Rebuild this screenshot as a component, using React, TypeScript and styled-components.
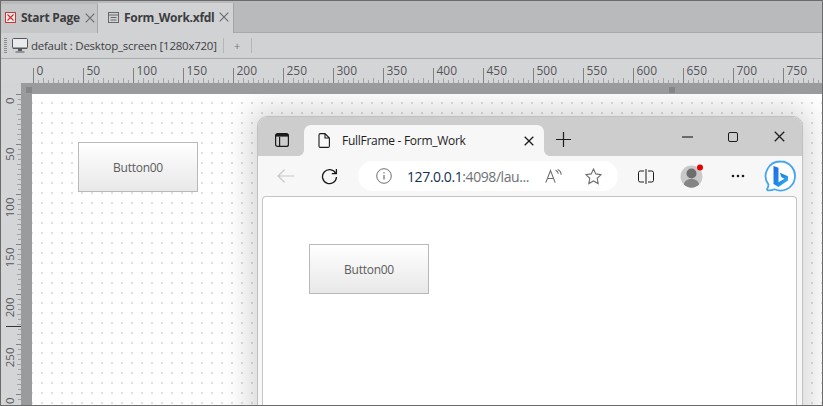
import React from "react";
import styled, { createGlobalStyle } from "styled-components";

const Global = createGlobalStyle`
  html, body { margin: 0; padding: 0; background: #fff; }
  * { box-sizing: border-box; }
`;

const Frame = styled.div`
  position: relative;
  width: 823px;
  height: 406px;
  border: 1px solid #6b6b6b;
  overflow: hidden;
  display: flex;
  flex-direction: column;
  font-family: "Open Sans", "Noto Sans", sans-serif;
  background: #d3d4d6;
`;

const TabBar = styled.div`
  height: 32px;
  flex: none;
  display: flex;
  align-items: flex-end;
  background: #b9babc;
  border-bottom: 1px solid #a9aaac;
  padding-top: 2px;
`;

const Tab = styled.div<{ $active?: boolean }>`
  height: ${(p) => (p.$active ? "30px" : "29px")};
  margin-bottom: -1px;
  padding-bottom: 2px;
  width: ${(p) => (p.$active ? "136px" : "97px")};
  flex: none;
  display: flex;
  align-items: center;
  gap: 5px;
  padding-left: ${(p) => (p.$active ? "10px" : "4px")};
  background: ${(p) => (p.$active ? "#d1d2d4" : "#c5c6c8")};
  border-right: 1px solid #a5a6a8;
  font-size: 12px;
  font-weight: 700;
  color: #3c3d40;
  letter-spacing: -0.28px;
`;

const TabClose = styled.span`
  display: flex;
  color: #68696c;
`;

const Toolbar = styled.div`
  height: 26px;
  flex: none;
  display: flex;
  align-items: center;
  padding-left: 3px;
  background: #d1d2d4;
  border-bottom: 1px solid #a9aaac;
  font-size: 11.5px;
  color: #3f4044;
`;

const Grip = styled.div`
  width: 3px;
  height: 16px;
  margin-right: 5px;
  background: repeating-linear-gradient(to bottom, #8a8b8d 0 1px, transparent 1px 2px);
`;

const ToolLabel = styled.span`
  margin-left: 3px;
  white-space: nowrap;
  letter-spacing: -0.25px;
`;

const ToolSep = styled.span<{ $gap?: number }>`
  width: 1px;
  height: 15px;
  margin-left: ${(p) => p.$gap ?? 0}px;
  background: #b4b5b7;
  flex: none;
`;

const ToolPlus = styled.span`
  width: 27px;
  text-align: center;
  font-size: 11px;
  color: #77787b;
`;

const RulerTop = styled.svg`
  display: block;
  flex: none;
  width: 821px;
  height: 24px;
  background: #d4d5d7;
`;

const Band = styled.div`
  position: relative;
  flex: none;
  height: 11px;
  margin-left: 20px;
  background: #9a9b9d;
`;

const BandMark = styled.span<{ $left: number }>`
  position: absolute;
  left: ${(p) => p.$left}px;
  top: 4px;
  width: 6px;
  height: 6px;
  background: #858688;
`;

const Body = styled.div`
  flex: 1;
  min-height: 0;
  display: flex;
`;

const RulerLeft = styled.svg`
  display: block;
  flex: none;
  width: 20px;
  height: 311px;
  background: #d4d5d7;
`;

const BandSide = styled.div`
  flex: none;
  width: 11px;
  background: #9a9b9d;
`;

const Canvas = styled.div`
  position: relative;
  flex: 1;
  background-color: #fff;
  background-image: radial-gradient(circle at 1px 1px, #e0e0e0 1px, transparent 1.1px);
  background-size: 10px 10px;
  background-position: 9px 8px;
  overflow: hidden;
`;

const FormButton = styled.div<{ $left: number; $top: number }>`
  position: absolute;
  left: ${(p) => p.$left}px;
  top: ${(p) => p.$top}px;
  width: 120px;
  height: 50px;
  display: flex;
  align-items: center;
  justify-content: center;
  border: 1px solid #b9b9b9;
  background: linear-gradient(#ffffff, #e8e8e8);
  font-family: "Open Sans", sans-serif;
  font-size: 12px;
  letter-spacing: -0.25px;
  color: #5c5c5c;
`;

const BrowserWindow = styled.div`
  position: absolute;
  left: 225px;
  top: 22px;
  width: 546px;
  height: 320px;
  border-radius: 10px 10px 0 0;
  border: 1px solid #c0c0c0;
  background: #f7f7f7;
  box-shadow: 0 0 28px 8px rgba(0, 0, 0, 0.16);
  display: flex;
  flex-direction: column;
  font-family: "Open Sans", sans-serif;
`;

const TabStrip = styled.div`
  height: 39px;
  flex: none;
  display: flex;
  align-items: flex-end;
  background: #cdcdcd;
  border-radius: 9px 9px 0 0;
`;

const StripIcon = styled.span`
  width: 46px;
  height: 31px;
  flex: none;
  display: flex;
  align-items: center;
  justify-content: center;
  padding-bottom: 2px;
  padding-left: 1px;
`;

const BrowserTab = styled.div`
  position: relative;
  width: 240px;
  height: 31px;
  flex: none;
  display: flex;
  align-items: center;
  background: #f7f7f7;
  border-radius: 7px 7px 0 0;
  padding: 0 10px 0 14px;
  font-size: 12px;
  color: #1d1d1d;

  &::before,
  &::after {
    content: "";
    position: absolute;
    bottom: 0;
    width: 6px;
    height: 6px;
  }
  &::before {
    left: -6px;
    background: radial-gradient(circle at 0 0, #cdcdcd 5.6px, #f7f7f7 6.2px);
  }
  &::after {
    right: -6px;
    background: radial-gradient(circle at 100% 0, #cdcdcd 5.6px, #f7f7f7 6.2px);
  }
`;

const BrowserTabTitle = styled.span`
  flex: 1;
  margin-left: 12px;
  letter-spacing: -0.28px;
  white-space: nowrap;
`;

const NewTab = styled.span`
  width: 39px;
  height: 31px;
  flex: none;
  display: flex;
  align-items: center;
  justify-content: center;
  padding-bottom: 2px;
`;

const WindowControls = styled.div`
  margin-left: auto;
  display: flex;
  align-self: stretch;
`;

const WindowControl = styled.span`
  width: 46px;
  display: flex;
  align-items: center;
  justify-content: center;
`;

const NavBar = styled.div`
  height: 40px;
  flex: none;
  display: flex;
  align-items: center;
  padding-left: 8px;
`;

const NavButton = styled.span<{ $width: number }>`
  width: ${(p) => p.$width}px;
  flex: none;
  display: flex;
  align-items: center;
  justify-content: center;
`;

const AddressPill = styled.div`
  width: 260px;
  height: 30px;
  flex: none;
  margin-left: 4px;
  display: flex;
  align-items: center;
  border-radius: 15px;
  background: #fff;
  padding-left: 18px;
  font-size: 14px;
`;

const Url = styled.span`
  margin-left: 15px;
  color: #14324f;
  white-space: nowrap;
  letter-spacing: -0.42px;
`;

const UrlRest = styled.span`
  color: #6f7174;
`;

const PillIcon = styled.span<{ $gap: number }>`
  display: flex;
  margin-left: ${(p) => p.$gap}px;
`;

const Viewport = styled.div`
  flex: 1;
  position: relative;
  margin: 0 5px 0 4px;
  background: #fff;
  border: 1px solid #c4c4c4;
  border-bottom: none;
  border-radius: 4px 4px 0 0;
`;

const rulerFont = "Open Sans, sans-serif";

const TopRuler = () => {
  const items: React.ReactNode[] = [];
  for (let v = 0; v <= 790; v += 5) {
    const x = 32.5 + v;
    const major = v % 50 === 0;
    const mid = v % 10 === 0;
    items.push(
      <line key={v} x1={x} x2={x} y1={major ? 9 : mid ? 19 : 21} y2={24} stroke={major ? "#808183" : "#a2a3a5"} />
    );
    if (major) {
      items.push(
        <text key={`t${v}`} x={x + 3} y={16} fontSize="12" fontFamily={rulerFont} fill="#55565a">
          {v}
        </text>
      );
    }
  }
  return <RulerTop viewBox="0 0 821 24">{items}</RulerTop>;
};

const LeftRuler = () => {
  const items: React.ReactNode[] = [];
  for (let v = 0; v <= 305; v += 5) {
    const y = 0.5 + v;
    const major = v % 50 === 0;
    const mid = v % 10 === 0;
    items.push(
      <line key={v} x1={major ? 15 : mid ? 16 : 17} x2={20} y1={y} y2={y} stroke={major ? "#808183" : "#a2a3a5"} />
    );
    if (major) {
      items.push(
        <text
          key={`t${v}`}
          transform={`translate(13 ${y + 3}) rotate(-90)`}
          textAnchor="end"
          fontSize="11.5"
          fontFamily={rulerFont}
          fill="#55565a"
        >
          {v >= 300 ? "0" : `${v}`}
        </text>
      );
    }
  }
  items.push(<line key="mark" x1={5} x2={20} y1={232.5} y2={232.5} stroke="#333" />);
  return <RulerLeft viewBox="0 0 20 311">{items}</RulerLeft>;
};

const CloseGlyph = ({ size = 10, color = "currentColor", w = 1.1 }: { size?: number; color?: string; w?: number }) => (
  <svg width={size} height={size} viewBox="0 0 10 10" fill="none" stroke={color} strokeWidth={w}>
    <path d="M.7.7l8.6 8.6M9.3.7L.7 9.3" />
  </svg>
);

const App = () => (
  <>
    <Global />
    <Frame>
      <TabBar>
        <Tab>
          <svg width="11" height="11" viewBox="0 0 11 11" fill="none">
            <rect x=".5" y=".5" width="10" height="10" fill="#f3e9e6" stroke="#c2393a" />
            <path d="M2.5 2.5l6 6M8.5 2.5l-6 6" stroke="#d0282a" strokeWidth="1.1" />
          </svg>
          Start Page
          <TabClose>
            <CloseGlyph />
          </TabClose>
        </Tab>
        <Tab $active>
          <svg width="11" height="11" viewBox="0 0 11 11" fill="none" stroke="#66676a">
            <rect x=".5" y=".5" width="10" height="10" />
            <path d="M.5 3h10M2.5 5.5h6M2.5 8h6" />
          </svg>
          Form_Work.xfdl
          <TabClose>
            <CloseGlyph />
          </TabClose>
        </Tab>
      </TabBar>
      <Toolbar>
        <Grip />
        <svg width="16" height="15" viewBox="0 0 16 15" fill="none">
          <rect x=".5" y=".5" width="15" height="10" rx="1" fill="#e9eaec" stroke="#55565a" />
          <rect x="1" y="9.500" width="14" height="1.5" fill="#55565a" />
          <path d="M6 11h4v2H6zM3.500 13.500h9v1h-9z" fill="#55565a" />
        </svg>
        <ToolLabel>default : Desktop_screen [1280x720]</ToolLabel>
        <ToolSep $gap={6} />
        <ToolPlus>+</ToolPlus>
        <ToolSep />
      </Toolbar>
      <TopRuler />
      <Band>
        <BandMark $left={5} />
        <BandMark $left={648} />
      </Band>
      <Body>
        <LeftRuler />
        <BandSide />
        <Canvas>
          <FormButton $left={46} $top={48}>Button00</FormButton>
          <BrowserWindow>
            <TabStrip>
              <StripIcon>
                <svg width="14" height="14" viewBox="0 0 14 14" fill="none" stroke="#1b1b1b" strokeWidth="1.2">
                  <rect x=".6" y=".6" width="12.8" height="12.8" rx="2" />
                  <path d="M4.600 3.800v9.600" />
                  <path d="M1 1h12v2.600H1z" fill="#1b1b1b" stroke="none" />
                </svg>
              </StripIcon>
              <BrowserTab>
                <svg width="12" height="15" viewBox="0 0 12 15" fill="none" stroke="#1b1b1b" strokeWidth="1.1">
                  <path d="M1 2a1.400 1.400 0 0 1 1.400-1.400H7L11.400 5v8a1.400 1.400 0 0 1-1.400 1.400H2.400A1.400 1.400 0 0 1 1 13zM7 .6V5h4.400" />
                </svg>
                <BrowserTabTitle>FullFrame - Form_Work</BrowserTabTitle>
                <CloseGlyph size={10} color="#1b1b1b" w={1.3} />
              </BrowserTab>
              <NewTab>
                <svg width="15" height="15" viewBox="0 0 15 15" stroke="#1b1b1b" strokeWidth="1.2">
                  <path d="M7.500 0v15M0 7.500h15" />
                </svg>
              </NewTab>
              <WindowControls>
                <WindowControl>
                  <svg width="11" height="2" viewBox="0 0 11 2"><path d="M0 1h11" stroke="#1b1b1b" strokeWidth="1.1" /></svg>
                </WindowControl>
                <WindowControl>
                  <svg width="10" height="10" viewBox="0 0 10 10" fill="none"><rect x=".5" y=".5" width="9" height="9" rx="1.500" stroke="#1b1b1b" /></svg>
                </WindowControl>
                <WindowControl>
                  <CloseGlyph size={11} color="#1b1b1b" w={1.1} />
                </WindowControl>
              </WindowControls>
            </TabStrip>
            <NavBar>
              <NavButton $width={38}>
                <svg width="17" height="14" viewBox="0 0 17 14" fill="none" stroke="#c7c7c7" strokeWidth="1.2">
                  <path d="M17 7H1M7.500.8L1 7l6.500 6.200" />
                </svg>
              </NavButton>
              <NavButton $width={50}>
                <svg width="17" height="17" viewBox="0 0 17 17" fill="none" stroke="#1b1b1b" strokeWidth="1.3">
                  <path d="M14.600 5.200A7 7 0 1 0 15.500 9M15.400 1v4.600h-4.600" />
                </svg>
              </NavButton>
              <AddressPill>
                <svg width="16" height="16" viewBox="0 0 16 16" fill="none" stroke="#6f6f6f" strokeWidth="1">
                  <circle cx="8" cy="8" r="7.300" />
                  <path d="M8 7v4.500M8 4.200v1.200" strokeWidth="1.2" />
                </svg>
                <Url>
                  127.0.0.1<UrlRest>:4098/lau...</UrlRest>
                </Url>
                <PillIcon $gap={16}>
                  <svg width="17" height="14" viewBox="0 0 17 14" fill="none" stroke="#6f6f6f" strokeWidth="1.1">
                    <path d="M.8 13.600L5.500 1.500l4.700 12.100M2.400 9.500h6.200M10.500 1.200a4.400 4.400 0 0 1 2.800 3.600M12.600.6a6 6 0 0 1 3.600 5.200" />
                  </svg>
                </PillIcon>
                <PillIcon $gap={23}>
                  <svg width="17" height="17" viewBox="0 0 17 17" fill="none" stroke="#6f6f6f" strokeWidth="1.1">
                    <path d="M8.500 1l2.300 4.900 5.300.7-3.900 3.700 1 5.300-4.700-2.600-4.700 2.600 1-5.300L.9 6.600l5.300-.7z" />
                  </svg>
                </PillIcon>
              </AddressPill>
              <NavButton $width={55}>
                <svg width="16" height="15" viewBox="0 0 16 15" fill="none" stroke="#1b1b1b" strokeWidth="1">
                  <path d="M6 2H2.200A1.700 1.700 0 0 0 .5 3.700v7.600A1.700 1.700 0 0 0 2.200 13H6M10 2h3.800a1.700 1.700 0 0 1 1.700 1.700v7.600a1.700 1.700 0 0 1-1.700 1.700H10M8 0v15" />
                </svg>
              </NavButton>
              <NavButton $width={37}>
                <svg width="24" height="24" viewBox="0 0 24 24">
                  <circle cx="11.500" cy="12.500" r="11" fill="#c9c9c9" />
                  <circle cx="11.500" cy="9.500" r="5" fill="#6e6e6e" />
                  <path d="M3.800 20.500c1-4 4-5.500 7.700-5.500s6.700 1.500 7.700 5.500a11 11 0 0 1-15.400 0z" fill="#858585" />
                  <circle cx="20" cy="3.500" r="3" fill="#e60000" />
                </svg>
              </NavButton>
              <NavButton $width={55}>
                <svg width="14" height="4" viewBox="0 0 14 4" fill="#1b1b1b">
                  <circle cx="2" cy="2" r="1.300" />
                  <circle cx="7" cy="2" r="1.300" />
                  <circle cx="12" cy="2" r="1.300" />
                </svg>
              </NavButton>
              <NavButton $width={30}>
                <svg width="32" height="32" viewBox="0 0 32 32" fill="none" style={{ flex: "none" }}>
                  <defs>
                    <linearGradient id="bingB" x1="0.1" y1="0" x2="0.9" y2="1">
                      <stop offset="0" stopColor="#1e6fe8" />
                      <stop offset="0.6" stopColor="#1f8be8" />
                      <stop offset="1" stopColor="#36c3ee" />
                    </linearGradient>
                  </defs>
                  <path
                    d="M16.500 1.500a14.500 14.500 0 1 1-6 27.700c-2 .9-4.500 1.400-6.500 1.100-1 -.1-1.300-1-.7-1.700.8-1 1.200-2.400 1.200-4A14.500 14.500 0 0 1 16.500 1.500z"
                    fill="#fff"
                    stroke="#43a6f0"
                    strokeWidth="1.800"
                  />
                  <path
                    d="M9.500 6l5 1.800v14.400l6-3.500-3-1.500-1.700-4.400 8.200 3.400v4.300L14.500 27l-5-3z"
                    fill="url(#bingB)"
                  />
                </svg>
              </NavButton>
            </NavBar>
            <Viewport>
              <FormButton $left={46} $top={47}>Button00</FormButton>
            </Viewport>
          </BrowserWindow>
        </Canvas>
      </Body>
    </Frame>
  </>
);

export default App;
